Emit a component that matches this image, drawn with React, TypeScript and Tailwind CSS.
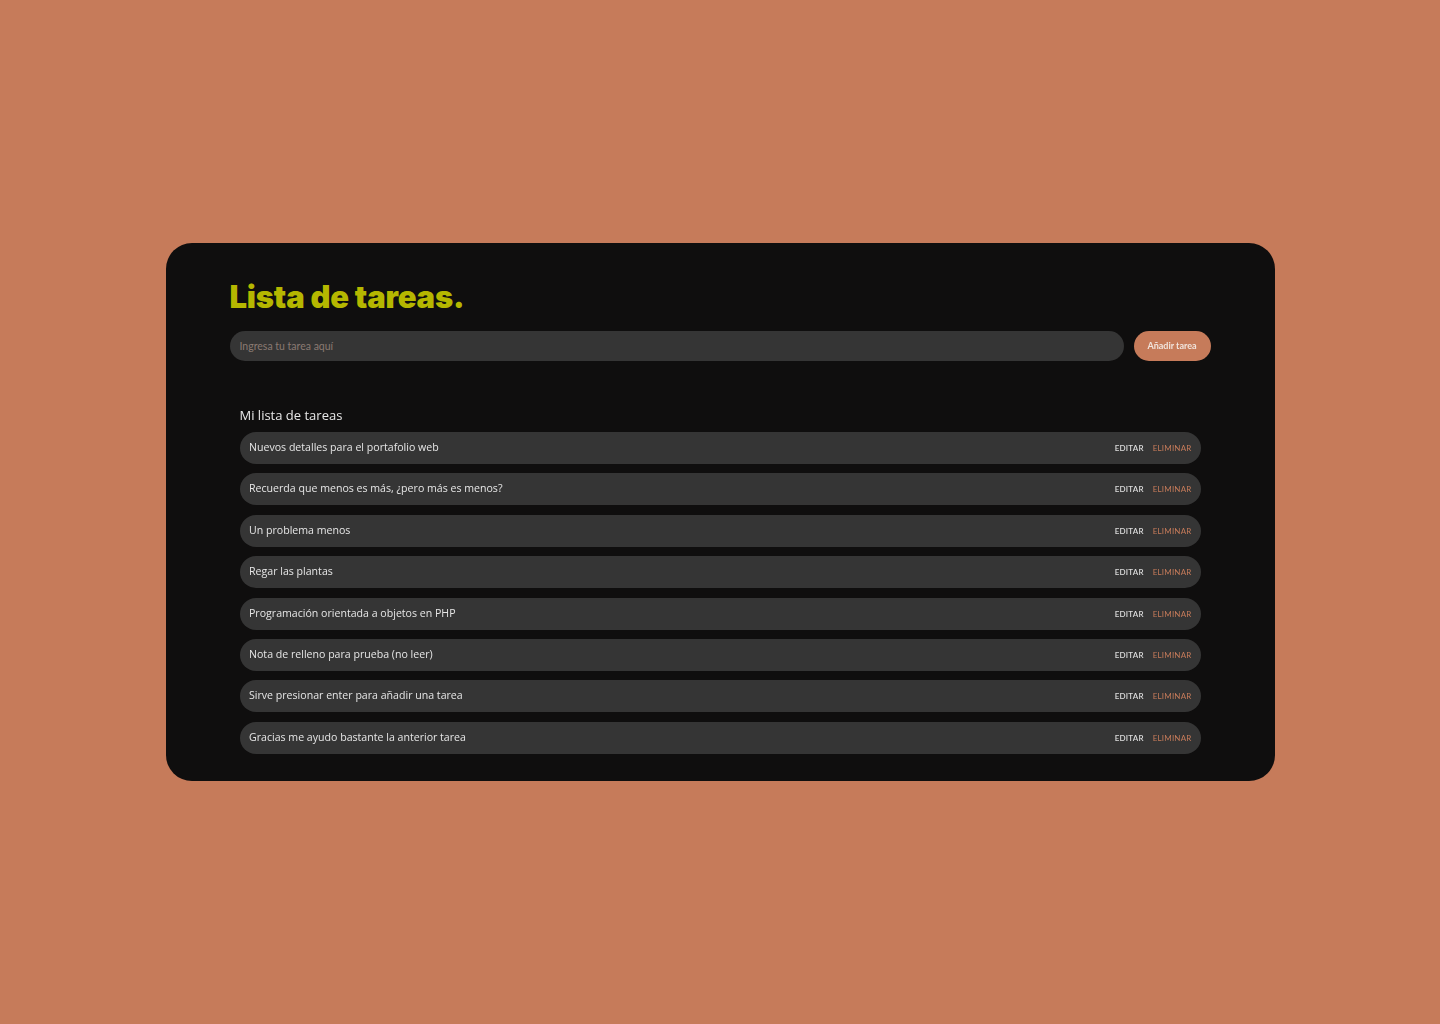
import { useState } from 'react'

const tareasIniciales = [
  'Nuevos detalles para el portafolio web',
  'Recuerda que menos es más, ¿pero más es menos?',
  'Un problema menos',
  'Regar las plantas',
  'Programación orientada a objetos en PHP',
  'Nota de relleno para prueba (no leer)',
  'Sirve presionar enter para añadir una tarea',
  'Gracias me ayudo bastante la anterior tarea',
]

const App = () => {
  const [tareas] = useState(tareasIniciales)

  return (
    <div className="min-h-screen w-full bg-[#c67b5a] flex items-center justify-center font-['Open_Sans',sans-serif]">
      <div className="w-[1109px] h-[538px] bg-[#0f0e0e] rounded-[26px] pl-[64px] pr-[64px] pt-[35px]">
        <h1 className="text-[31px] leading-[38px] font-black text-[#b5b700] tracking-[-0.2px] font-['Inter',sans-serif]">
          Lista de tareas.
        </h1>
        <div className="flex items-center gap-[10px] mt-[15px]">
          <input
            autoFocus
            className="flex-1 h-[30px] rounded-full bg-[#353535] px-[10px] text-[10.5px] text-[#ddd] placeholder:text-[#8a7a72] outline-none caret-[#ddd] font-['Lato',sans-serif]"
            placeholder="Ingresa tu tarea aquí"
          />
          <button className="h-[30px] w-[77px] rounded-full bg-[#c67b5a] text-[9px] font-bold text-[#f1e4dc] font-['Lato',sans-serif]">
            Añadir tarea
          </button>
        </div>
        <div className="px-[10px] mt-[46px]">
          <h2 className="text-[13px] leading-[16px] text-[#e8e8e8]">Mi lista de tareas</h2>
          <ul className="flex flex-col gap-[9.4px] mt-[9px]">
            {tareas.map((t) => (
              <li key={t} className="h-[32px] rounded-full bg-[#353535] flex items-center justify-between pl-[9.5px] pr-[9px]">
                <span className="text-[10.6px] text-[#e6e6e6]">{t}</span>
                <div className="flex items-center gap-[9px] text-[8px] font-['Lato',sans-serif] tracking-[0.2px]">
                  <button className="text-[#dcdcdc] font-semibold">EDITAR</button>
                  <button className="text-[#c67b5a]">ELIMINAR</button>
                </div>
              </li>
            ))}
          </ul>
        </div>
      </div>
    </div>
  )
}

export default App
